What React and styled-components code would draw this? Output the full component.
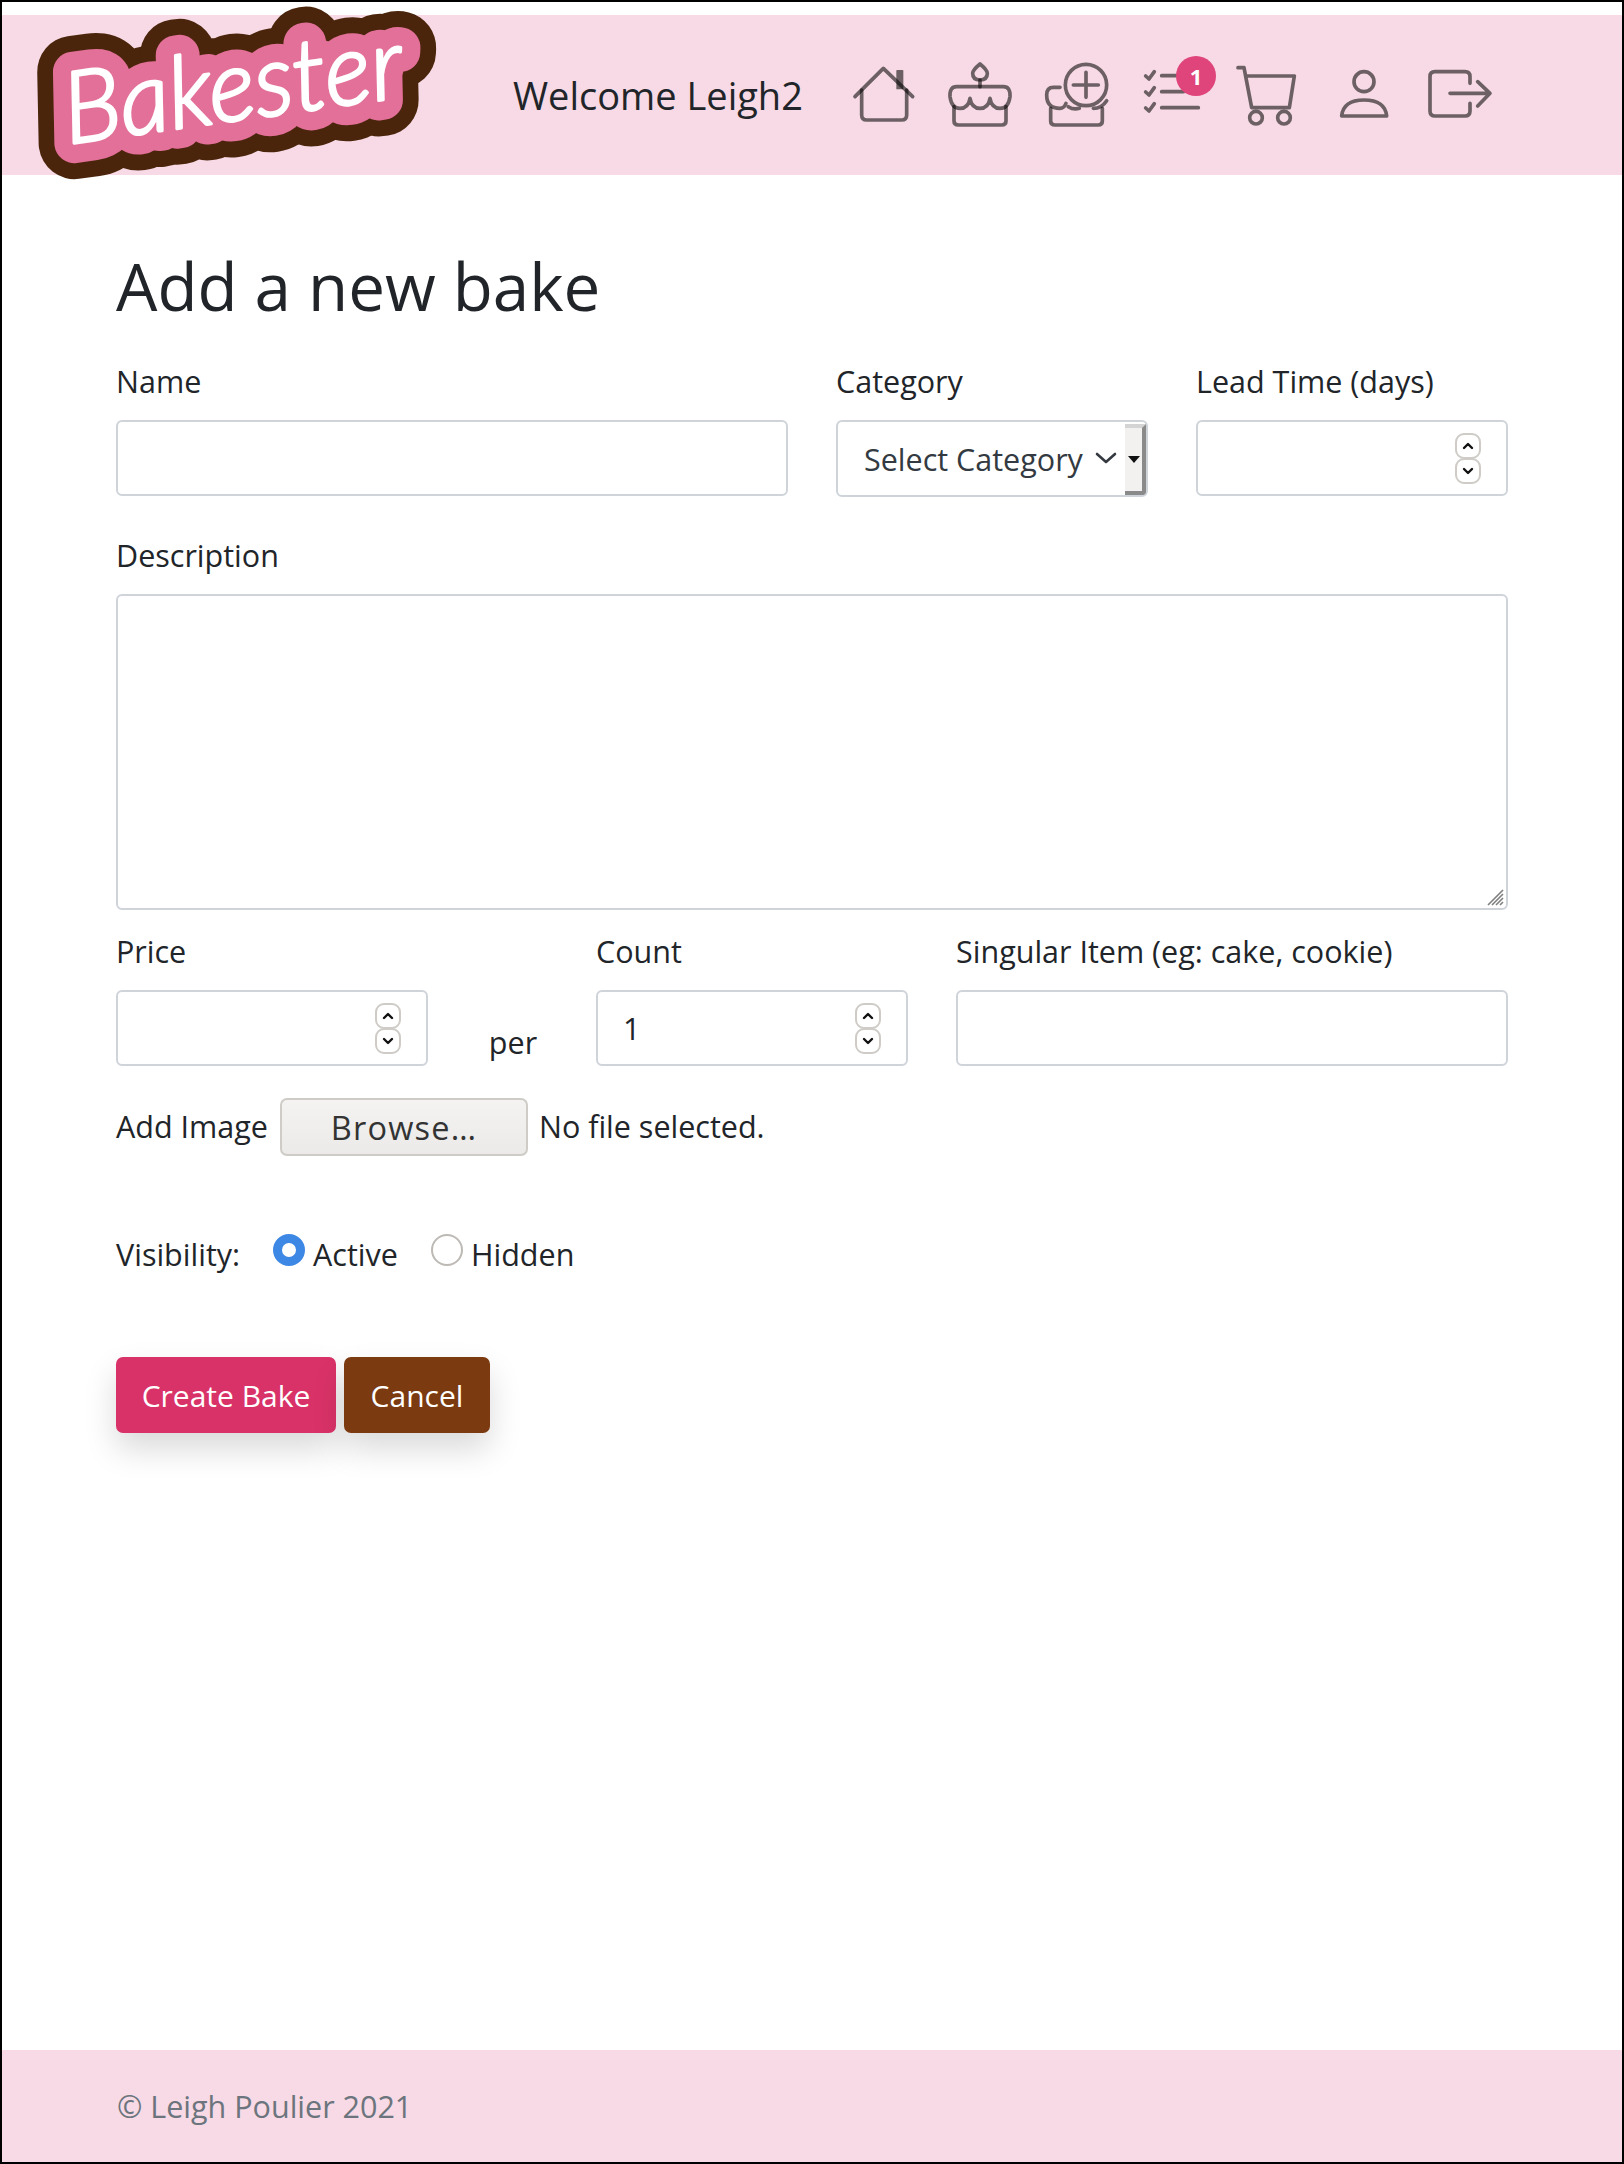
import React from "react";
import styled, { createGlobalStyle } from "styled-components";

const GlobalStyle = createGlobalStyle`
  html, body {
    margin: 0;
    padding: 0;
    background: #fff;
  }
  body {
    font-family: "Open Sans", "Noto Sans", sans-serif;
    color: #212529;
  }
  * {
    box-sizing: border-box;
  }
`;

const Page = styled.div`
  width: 1624px;
  height: 2164px;
  border: 2px solid #000;
  display: flex;
  flex-direction: column;
  background: #fff;
`;

const Header = styled.header`
  margin-top: 13px;
  height: 160px;
  flex: none;
  background: #f7dae5;
  display: flex;
  align-items: center;
  padding-left: 28px;
`;

const LogoSvg = styled.svg`
  width: 420px;
  height: 170px;
  flex: none;
  margin-top: 4px;
  overflow: visible;
`;

const LogoText = styled.text`
  font-family: "Lato", sans-serif;
  font-style: italic;
  font-weight: 300;
  font-size: 100px;
  stroke-linejoin: round;
  stroke-linecap: round;
`;

const Welcome = styled.div`
  margin-left: 63px;
  font-size: 38px;
  width: 322px;
  flex: none;
  color: #212529;
  white-space: nowrap;
`;

const Nav = styled.nav`
  display: flex;
`;

const NavItem = styled.a`
  position: relative;
  display: block;
  width: 96px;
  height: 110px;
`;

const IconSvg = styled.svg`
  display: block;
  width: 96px;
  height: 110px;
  fill: none;
  stroke: #000;
  stroke-opacity: 0.56;
  stroke-width: 11;
  stroke-linecap: round;
  stroke-linejoin: round;
`;

const Chimney = styled.rect`
  fill: #000;
  fill-opacity: 0.56;
  stroke: none;
`;

const Badge = styled.span`
  position: absolute;
  left: 53px;
  top: 16px;
  width: 40px;
  height: 40px;
  border-radius: 50%;
  background: #df447a;
  color: #fff;
  font-size: 22px;
  font-weight: 700;
  display: flex;
  align-items: center;
  justify-content: center;
`;

const Main = styled.main`
  flex: 1;
  padding: 69px 114px 0;
`;

const Title = styled.h1`
  margin: 0 0 30px;
  font-size: 65.5px;
  font-weight: 400;
  line-height: 84px;
  color: #212529;
`;

const Row = styled.div`
  display: grid;
  grid-template-columns: repeat(12, 72px);
  column-gap: 48px;
  margin-bottom: ${(p) => p.$gap || 0}px;
`;

const Field = styled.div`
  grid-column: span ${(p) => p.$span};
  display: flex;
  flex-direction: column;
`;

const Label = styled.label`
  font-size: 30.5px;
  line-height: 46px;
  margin-bottom: 16px;
  white-space: nowrap;
`;

const Input = styled.input`
  width: 100%;
  height: 76px;
  border: 2px solid #ced4da;
  border-radius: 6px;
  padding: 0 26px;
  font: inherit;
  font-size: 30px;
  color: #495057;
  background: #fff;
  outline: none;
`;

const AreaWrap = styled.div`
  position: relative;
`;

const Area = styled.textarea`
  display: block;
  width: 100%;
  height: 316px;
  border: 2px solid #ced4da;
  border-radius: 6px;
  background: #fff;
  outline: none;
  resize: none;
`;

const ResizeGrip = styled.svg`
  position: absolute;
  right: 4px;
  bottom: 4px;
  width: 17px;
  height: 17px;
  stroke: #808080;
  stroke-width: 1.6;
`;

const NumberBox = styled.div`
  height: 76px;
  border: 2px solid #ced4da;
  border-radius: 6px;
  padding: 0 25px 0 25px;
  display: flex;
  align-items: center;
  justify-content: space-between;
`;

const NumberValue = styled.span`
  font-size: 30.5px;
  color: #212529;
`;

const Spinner = styled.div`
  display: flex;
  flex-direction: column;
  width: 26px;
  margin-top: -1px;
`;

const SpinButton = styled.span`
  height: 26px;
  margin-bottom: -1px;
  border: 2px solid #cfccc8;
  border-radius: 9px;
  background: #fff;
  display: flex;
  align-items: center;
  justify-content: center;

  svg {
    width: 14px;
    height: 10px;
    fill: none;
    stroke: #111;
    stroke-width: 2.4;
    stroke-linecap: round;
    stroke-linejoin: round;
  }
`;

const SelectBox = styled.div`
  height: 77px;
  border: 2px solid #ced4da;
  border-radius: 6px;
  padding-left: 26px;
  display: flex;
  align-items: center;
  overflow: hidden;
  color: #333a41;
`;

const SelectText = styled.span`
  flex: none;
  width: 231px;
  white-space: nowrap;
  font-size: 30.5px;
`;

const Chevron = styled.svg`
  flex: none;
  width: 22px;
  height: 12px;
  margin: -2px 8px 0 0;
  fill: none;
  stroke: #343a40;
  stroke-width: 2.6;
  stroke-linecap: round;
  stroke-linejoin: round;
`;

const SelectArrow = styled.span`
  flex: 1;
  align-self: stretch;
  margin-top: 2px;
  background: #f2f1f0;
  border-top: 4px solid #d4d4d4;
  border-right: 4px solid #8a8a8a;
  border-bottom: 4px solid #8a8a8a;
  display: flex;
  align-items: center;
  justify-content: center;

  &::after {
    content: "";
    border-left: 6px solid transparent;
    border-right: 6px solid transparent;
    border-top: 7px solid #111;
  }
`;

const PerCell = styled.div`
  grid-column: span 1;
  display: flex;
  align-items: flex-end;
  justify-content: center;
  font-size: 30.5px;
  line-height: 48px;
  padding-left: 2px;
`;

const FileRow = styled.div`
  display: flex;
  align-items: center;
  margin-top: 32px;
  height: 58px;
  font-size: 30.5px;
`;

const FileText = styled.span`
  margin-top: -2px;
`;

const BrowseButton = styled.button`
  width: 248px;
  height: 58px;
  margin: 0 11px 0 12px;
  border: 2px solid #cfccc8;
  border-radius: 7px;
  background: linear-gradient(#f4f3f2, #ebeae8);
  color: #333;
  font: inherit;
  font-size: 32.5px;
  letter-spacing: 1.2px;
  padding: 0;
`;

const VisibilityRow = styled.div`
  display: flex;
  align-items: center;
  margin-top: 68px;
  height: 60px;
  font-size: 30.5px;
`;

const VisibilityLabel = styled.span`
  width: 157px;
`;

const Radio = styled.span`
  width: 32px;
  height: 32px;
  border-radius: 50%;
  flex: none;
  margin-top: -8px;
  background: #fff;
  border: ${(p) => (p.$on ? "9px solid #3d87e5" : "2px solid #bdb9b5")};
`;

const RadioText = styled.span`
  margin-left: 8px;
  width: ${(p) => p.$width}px;
`;

const Actions = styled.div`
  display: flex;
  gap: 8px;
  margin-top: 73px;
`;

const Button = styled.button`
  height: 76px;
  width: ${(p) => p.$width}px;
  border: none;
  border-radius: 7px;
  background: ${(p) => p.$bg};
  color: #fff;
  font: inherit;
  font-size: 30px;
  padding: 0;
  box-shadow: 0 16px 32px rgba(0, 0, 0, 0.15);
`;

const Footer = styled.footer`
  flex: none;
  height: 112px;
  background: #f7dae5;
  display: flex;
  align-items: center;
  padding-left: 115px;
  font-size: 30.5px;
  color: #6c757d;
`;

function Logo() {
  const layers = [
    { stroke: "#4a250c", width: 72 },
    { stroke: "#e37098", width: 40 },
    { stroke: "#ffffff", width: 3 },
  ];
  return (
    <LogoSvg viewBox="0 0 420 170" aria-label="Bakester">
      {layers.map((l) => (
        <LogoText
          key={l.stroke}
          x="38"
          y="132"
          transform="rotate(-8 38 132)"
          textLength="342"
          lengthAdjust="spacingAndGlyphs"
          fill={l.stroke}
          stroke={l.stroke}
          strokeWidth={l.width}
        >
          Bakester
        </LogoText>
      ))}
    </LogoSvg>
  );
}

function Icon({ x, children }) {
  return <IconSvg viewBox={`${x} 0 288 330`}>{children}</IconSvg>;
}

function Spin() {
  return (
    <Spinner>
      <SpinButton>
        <svg viewBox="0 0 14 10">
          <path d="M3 7 L7 3 L11 7" />
        </svg>
      </SpinButton>
      <SpinButton>
        <svg viewBox="0 0 14 10">
          <path d="M3 3 L7 7 L11 3" />
        </svg>
      </SpinButton>
    </Spinner>
  );
}

function App() {
  return (
    <Page>
      <GlobalStyle />
      <Header>
        <Logo />
        <Welcome>Welcome Leigh2</Welcome>
        <Nav>
          <NavItem>
            <Icon x={15}>
              <path d="M75 170 L160 85 L248 170" />
              <path d="M95 150 V225 Q95 240 110 240 H215 Q230 240 230 225 V150" />
              <Chimney x="199" y="90" width="21" height="58" rx="2" />
            </Icon>
          </NavItem>
          <NavItem>
            <Icon x={303}>
              <path d="M450 72 Q472 90 472 100 Q472 120 450 120 Q428 120 428 100 Q428 90 450 72 Z" />
              <path d="M450 120 V140" />
              <path d="M380 140 H520 Q542 140 540 170 Q535 205 510 205 Q485 205 480 175 Q475 205 450 205 Q425 205 420 175 Q415 205 390 205 Q365 205 360 170 Q358 140 380 140 Z" />
              <path d="M372 200 V243 Q372 255 385 255 H515 Q528 255 528 243 V200" />
            </Icon>
          </NavItem>
          <NavItem>
            <Icon x={591}>
              <circle cx="768" cy="135" r="62" />
              <path d="M730 135 H805 M768 97 V172" />
              <path d="M690 142 H670 Q650 142 650 165 Q650 205 690 205 Q702 205 708 190" />
              <path d="M662 205 V243 Q662 255 675 255 H805 Q817 255 817 243 V205" />
              <path d="M715 200 Q730 210 748 205 M790 205 Q815 205 830 182" />
            </Icon>
          </NavItem>
          <NavItem>
            <Icon x={879}>
              <path d="M947 108 L957 117 L973 95" />
              <path d="M947 156 L957 165 L973 143" />
              <path d="M947 204 L957 213 L973 191" />
              <path d="M995 107 H1060 M995 155 H1060 M995 203 H1105" />
            </Icon>
            <Badge>1</Badge>
          </NavItem>
          <NavItem>
            <Icon x={117}>
              <path d="M174 83 H192 L215 203 H328 L343 108 H198" />
              <circle cx="228" cy="233" r="19" />
              <circle cx="312" cy="233" r="19" />
            </Icon>
          </NavItem>
          <NavItem>
            <Icon x={405}>
              <circle cx="552" cy="125" r="30" />
              <path d="M485 228 Q490 180 552 180 Q615 180 620 228 Z" />
            </Icon>
          </NavItem>
          <NavItem>
            <Icon x={693}>
              <path d="M870 130 V110 Q870 95 855 95 H765 Q750 95 750 110 V213 Q750 228 765 228 H855 Q870 228 870 213 V190" />
              <path d="M810 160 H930 M893 125 L930 160 L893 198" />
            </Icon>
          </NavItem>
        </Nav>
      </Header>
      <Main>
        <Title>Add a new bake</Title>
        <Row $gap={35}>
          <Field $span={6}>
            <Label>Name</Label>
            <Input />
          </Field>
          <Field $span={3}>
            <Label>Category</Label>
            <SelectBox>
              <SelectText>Select Category</SelectText>
              <Chevron viewBox="0 0 22 12">
                <path d="M2 2 L11 10 L20 2" />
              </Chevron>
              <SelectArrow />
            </SelectBox>
          </Field>
          <Field $span={3}>
            <Label>Lead Time (days)</Label>
            <NumberBox>
              <NumberValue />
              <Spin />
            </NumberBox>
          </Field>
        </Row>
        <Row $gap={18}>
          <Field $span={12}>
            <Label>Description</Label>
            <AreaWrap>
              <Area />
              <ResizeGrip viewBox="0 0 17 17">
                <path d="M1 16 L16 1 M5 16 L16 5 M9 16 L16 9 M13 16 L16 13" />
              </ResizeGrip>
            </AreaWrap>
          </Field>
        </Row>
        <Row>
          <Field $span={3}>
            <Label>Price</Label>
            <NumberBox>
              <NumberValue />
              <Spin />
            </NumberBox>
          </Field>
          <PerCell>per</PerCell>
          <Field $span={3}>
            <Label>Count</Label>
            <NumberBox>
              <NumberValue>1</NumberValue>
              <Spin />
            </NumberBox>
          </Field>
          <Field $span={5}>
            <Label>Singular Item (eg: cake, cookie)</Label>
            <Input />
          </Field>
        </Row>
        <FileRow>
          <FileText>Add Image</FileText>
          <BrowseButton>Browse…</BrowseButton>
          <FileText>No file selected.</FileText>
        </FileRow>
        <VisibilityRow>
          <VisibilityLabel>Visibility:</VisibilityLabel>
          <Radio $on />
          <RadioText $width={118}>Active</RadioText>
          <Radio />
          <RadioText>Hidden</RadioText>
        </VisibilityRow>
        <Actions>
          <Button $width={220} $bg="#d93268">
            Create Bake
          </Button>
          <Button $width={146} $bg="#7b3a10">
            Cancel
          </Button>
        </Actions>
      </Main>
      <Footer>© Leigh Poulier 2021</Footer>
    </Page>
  );
}

export default App;
